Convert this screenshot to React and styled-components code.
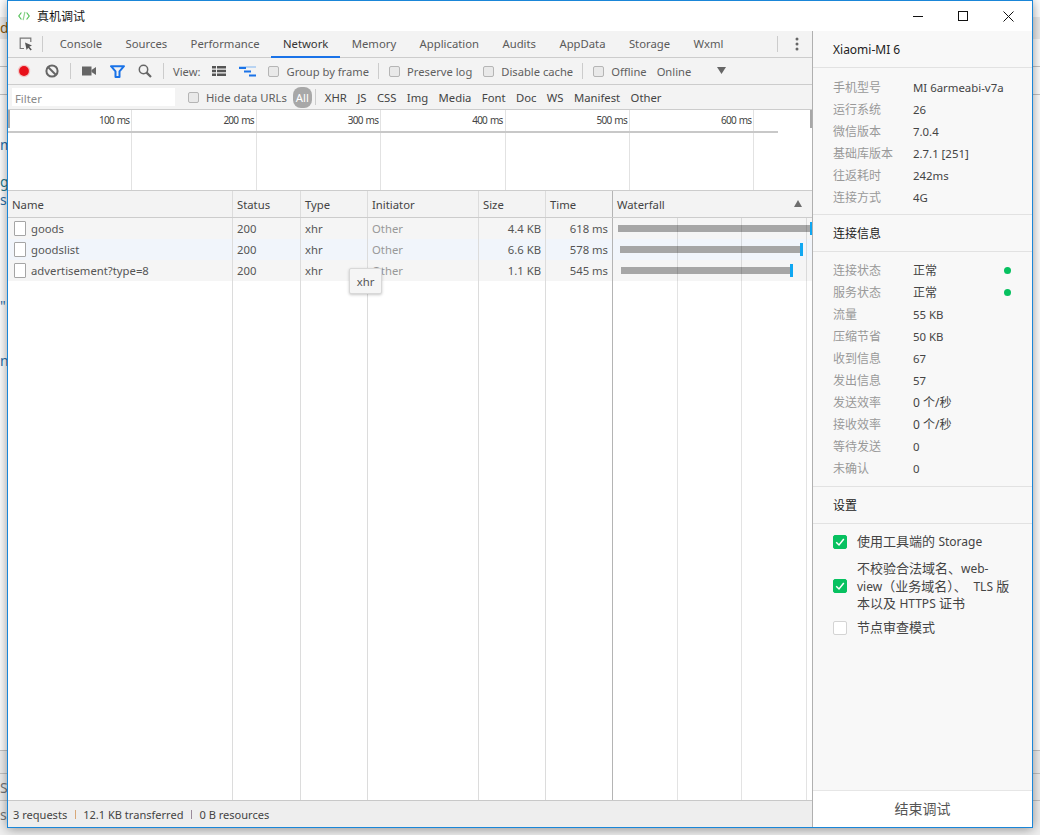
import React from "react";
import styled, { createGlobalStyle } from "styled-components";

const GlobalStyle = createGlobalStyle`
  html, body {
    margin: 0;
    padding: 0;
    background: #f4f4f4;
  }
  * {
    box-sizing: border-box;
  }
  body {
    font-family: "Noto Sans", "Noto Sans CJK SC", sans-serif;
    font-size: 11.3px;
    color: #555;
  }
`;

const Page = styled.div`
  position: relative;
  width: 1040px;
  height: 835px;
  overflow: hidden;
  background: linear-gradient(#fff 0, #fff 750px, #f0f0f0 750px);
`;

const BehindText = styled.span`
  position: absolute;
  left: ${(p) => p.$x}px;
  top: ${(p) => p.$y}px;
  font-size: 14px;
  line-height: 16px;
  color: ${(p) => p.$color || "#2b6ea8"};
`;

const BehindLine = styled.div`
  position: absolute;
  left: 0;
  right: 0;
  top: ${(p) => p.$y}px;
  height: ${(p) => p.$h || 1}px;
  background: ${(p) => p.$color || "#c4c4c4"};
`;

const Window = styled.div`
  position: relative;
  margin-left: 7px;
  width: 1026px;
  height: 828px;
  display: flex;
  flex-direction: column;
  background: #fff;
  border: 1px solid #1a86d8;
  box-shadow: 0 1px 11px rgba(0, 0, 0, 0.42);
`;

const TitleBar = styled.div`
  height: 30px;
  flex: none;
  display: flex;
  align-items: center;
  padding-left: 10px;
  background: #fff;
`;

const TitleText = styled.span`
  margin-left: 7px;
  font-size: 12px;
  color: #111;
`;

const WindowButtons = styled.div`
  margin-left: auto;
  display: flex;
  align-items: center;
  padding-right: 18px;
  gap: 35px;
  color: #111;
`;

const Main = styled.div`
  flex: 1;
  display: flex;
  min-height: 0;
`;

const Devtools = styled.div`
  width: 804px;
  flex: none;
  display: flex;
  flex-direction: column;
  background: #fff;
`;

const TabBar = styled.div`
  height: 27px;
  flex: none;
  display: flex;
  align-items: stretch;
  background: #f3f3f3;
  border-bottom: 1px solid #ccc;
`;

const InspectButton = styled.div`
  width: 34px;
  display: flex;
  align-items: center;
  justify-content: center;
  padding-left: 1px;
  color: #666;
`;

const TabSpacer = styled.div`
  width: 5px;
`;

const Tab = styled.div`
  padding: 0 11.7px;
  display: flex;
  align-items: center;
  white-space: nowrap;
  color: ${(p) => (p.$active ? "#333" : "#5a5a5a")};
  margin-bottom: -1px;
  border-bottom: 2px solid ${(p) => (p.$active ? "#1a73e8" : "transparent")};
`;

const Divider = styled.div`
  width: 1px;
  height: 16px;
  flex: none;
  align-self: center;
  background: #ccc;
  margin: 0 ${(p) => p.$gap ?? 9}px;
`;

const MoreButton = styled.div`
  margin-left: auto;
  width: 35px;
  display: flex;
  align-items: center;
  gap: 17px;
  color: #666;
`;

const Toolbar = styled.div`
  height: 27px;
  flex: none;
  display: flex;
  align-items: center;
  padding-left: 9px;
  font-size: 11.2px;
  background: #f3f3f3;
  border-bottom: 1px solid #ccc;
  white-space: nowrap;
`;

const ToolIcon = styled.div`
  width: ${(p) => p.$w || 28}px;
  margin-left: ${(p) => p.$left ?? 0}px;
  flex: none;
  display: flex;
  align-items: center;
  justify-content: center;
`;

const ToolLabel = styled.span`
  margin: 0 ${(p) => p.$right ?? 0}px 0 ${(p) => p.$left ?? 0}px;
  color: #5f5f5f;
`;

const DropArrow = styled.svg`
  margin-left: 26px;
  margin-bottom: 2px;
`;

const SmallCheck = styled.span`
  display: inline-block;
  width: 11px;
  height: 11px;
  flex: none;
  margin-left: ${(p) => p.$left ?? 0}px;
  margin-right: 7px;
  border: 1px solid #b5b5b5;
  border-radius: 2px;
  background: #e9e9e9;
`;

const FilterBar = styled.div`
  height: 25px;
  flex: none;
  display: flex;
  align-items: center;
  padding-left: 4px;
  background: #f3f3f3;
  border-bottom: 1px solid #ccc;
  white-space: nowrap;
`;

const FilterInput = styled.div`
  width: 163px;
  height: 18px;
  flex: none;
  padding-left: 3px;
  line-height: 21px;
  background: #fff;
  color: #8a8a8a;
`;

const AllPill = styled.span`
  width: 19px;
  height: 21px;
  margin-left: 6px;
  flex: none;
  display: flex;
  align-items: center;
  justify-content: center;
  border-radius: 8px;
  background: #a8a8a8;
  color: #fff;
`;

const TypeFilters = styled.div`
  display: flex;
  padding: 1px 0 0 6px;
`;

const TypeFilter = styled.span`
  margin-right: 10.4px;
  color: #444;
`;

const Overview = styled.div`
  position: relative;
  height: 81px;
  flex: none;
  display: flex;
  background: #fff;
  border-bottom: 1px solid #ccc;
`;

const OverviewTick = styled.div`
  width: 124.4px;
  flex: none;
  padding: 3px 2px 0 0;
  text-align: right;
  font-size: 10px;
  letter-spacing: -0.75px;
  word-spacing: 1px;
  line-height: 14px;
  color: #444;
  border-right: 1px solid #e2e2e2;
`;

const OverviewBar = styled.div`
  position: absolute;
  left: 0;
  top: 21px;
  width: 770px;
  height: 2px;
  background: #c8c8c8;
`;

const OverviewHandle = styled.div`
  position: absolute;
  top: 0;
  ${(p) => (p.$right ? "right: 0;" : "left: 0;")}
  width: 2px;
  height: 18px;
  background: #a8a8a8;
`;

const Table = styled.div`
  position: relative;
  flex: 1;
  min-height: 0;
  display: flex;
  flex-direction: column;
`;

const Row = styled.div`
  display: grid;
  grid-template-columns: 225px 68px 67px 111px 67px 67px 199px;
  flex: ${(p) => (p.$fill ? "1" : "none")};
  height: ${(p) => (p.$fill ? "auto" : p.$head ? "27px" : "21px")};
  background: ${(p) => p.$bg || "transparent"};
  border-bottom: ${(p) => (p.$head ? "1px solid #ccc" : "0")};
`;

const Cell = styled.div`
  position: relative;
  display: flex;
  align-items: center;
  justify-content: ${(p) => (p.$num ? "flex-end" : "flex-start")};
  padding: 0 4px;
  white-space: nowrap;
  color: ${(p) => p.$color || "#555"};
  border-right: ${(p) => (p.$last ? "0" : "1px solid #dcdcdc")};
  ${(p) => (p.$wf ? "border-left: 1px solid #b4b4b4; margin-left: -1px;" : "")}
`;

const HeadCell = styled(Cell)`
  color: #444;
  padding-top: 1px;
`;

const FileIcon = styled.span`
  width: 12px;
  height: 15px;
  margin: 0 5px 0 2px;
  flex: none;
  background: #fff;
  border: 1px solid #a5a5a5;
  border-radius: 1px;
`;

const SortArrow = styled.span`
  position: absolute;
  right: 10px;
  top: 9px;
  width: 0;
  height: 0;
  border-left: 4px solid transparent;
  border-right: 4px solid transparent;
  border-bottom: 7px solid #6e6e6e;
`;

const WaterBar = styled.div`
  position: absolute;
  left: ${(p) => p.$left}px;
  width: ${(p) => p.$width}px;
  top: 7px;
  height: 7px;
  background: #a6a6a6;
`;

const WaterMark = styled.div`
  position: absolute;
  left: ${(p) => p.$left}px;
  width: ${(p) => p.$width}px;
  top: 4px;
  height: 13px;
  background: #0fa7f2;
`;

const WaterLine = styled.div`
  position: absolute;
  left: ${(p) => p.$left}px;
  top: 27px;
  bottom: 0;
  width: 1px;
  background: rgba(0, 0, 0, 0.11);
`;

const Tooltip = styled.div`
  position: absolute;
  left: 341px;
  top: 77px;
  width: 33px;
  height: 26px;
  display: flex;
  align-items: center;
  justify-content: center;
  background: #f5f5f5;
  border: 1px solid #d8d8d8;
  border-radius: 2px;
  box-shadow: 0 1px 3px rgba(0, 0, 0, 0.22);
  color: #555;
`;

const StatusBar = styled.div`
  height: 27px;
  flex: none;
  display: flex;
  align-items: center;
  padding-left: 5px;
  font-size: 11.05px;
  background: #eee;
  border-top: 1px solid #c8c8c8;
  color: #444;
  white-space: nowrap;
`;

const StatusSep = styled.span`
  width: 1px;
  height: 9px;
  margin: 0 7.5px 0 7.5px;
  background: ${(p) => p.$color};
`;

const Panel = styled.div`
  flex: 1;
  display: flex;
  flex-direction: column;
  background: #f8f8f8;
  border-left: 1px solid #b0b0b0;
`;

const PanelHead = styled.div`
  height: ${(p) => p.$h || 37}px;
  flex: none;
  display: flex;
  align-items: center;
  padding-left: 20px;
  font-size: 12px;
  color: #222;
  border-bottom: 1px solid #e2e2e2;
`;

const InfoList = styled.div`
  padding: ${(p) => p.$top}px 20px ${(p) => p.$bottom}px;
  border-bottom: 1px solid #e2e2e2;
`;

const InfoRow = styled.div`
  height: 22px;
  display: flex;
  align-items: center;
`;

const InfoKey = styled.span`
  width: 80px;
  flex: none;
  font-size: 12px;
  color: #999;
`;

const InfoValue = styled.span`
  font-size: ${(p) => (p.$cjk ? "12px" : "11.4px")};
  color: #444;
`;

const StatusDot = styled.span`
  margin-left: auto;
  width: 7px;
  height: 7px;
  border-radius: 50%;
  background: #07c160;
  transform: translateX(-1px);
`;

const Settings = styled.div`
  padding: 8px 20px 0;
  display: flex;
  flex-direction: column;
`;

const SettingRow = styled.div`
  display: flex;
  align-items: center;
  min-height: ${(p) => p.$h || 22}px;
  margin-bottom: ${(p) => p.$gap ?? 0}px;
`;

const BigCheck = styled.span`
  width: 14px;
  height: 14px;
  flex: none;
  margin-right: 10px;
  display: flex;
  align-items: center;
  justify-content: center;
  border-radius: 2px;
  background: ${(p) => (p.$on ? "#07c160" : "#fff")};
  border: 1px solid ${(p) => (p.$on ? "#07c160" : "#d4d4d4")};
`;

const SettingText = styled.span`
  font-size: 13px;
  line-height: 16.5px;
  color: #444;
`;

const Latin = styled.span`
  font-size: 12px;
`;

const EndButton = styled.div`
  margin-top: auto;
  height: 37px;
  flex: none;
  display: flex;
  align-items: center;
  justify-content: center;
  padding-bottom: 3px;
  background: #fff;
  border-top: 1px solid #e6e6e6;
  font-size: 14px;
  color: #555;
`;

const tabs = ["Console", "Sources", "Performance", "Network", "Memory", "Application", "Audits", "AppData", "Storage", "Wxml"];
const ticks = ["100 ms", "200 ms", "300 ms", "400 ms", "500 ms", "600 ms"];
const typeFilters = ["XHR", "JS", "CSS", "Img", "Media", "Font", "Doc", "WS", "Manifest", "Other"];
const requests = [
  { name: "goods", size: "4.4 KB", time: "618 ms", bg: "#f5f5f5", left: 5, width: 192, mark: 197, markW: 2 },
  { name: "goodslist", size: "6.6 KB", time: "578 ms", bg: "#f1f5fb", left: 7, width: 180, mark: 187, markW: 2.5 },
  { name: "advertisement?type=8", size: "1.1 KB", time: "545 ms", bg: "#f5f5f5", left: 8, width: 169, mark: 177, markW: 3 },
];
const deviceInfo = [
  ["手机型号", "MI 6armeabi-v7a"],
  ["运行系统", "26"],
  ["微信版本", "7.0.4"],
  ["基础库版本", "2.7.1 [251]"],
  ["往返耗时", "242ms"],
  ["连接方式", "4G"],
];
const connInfo = [
  ["连接状态", "正常", true],
  ["服务状态", "正常", true],
  ["流量", "55 KB"],
  ["压缩节省", "50 KB"],
  ["收到信息", "67"],
  ["发出信息", "57"],
  ["发送效率", "0 个/秒"],
  ["接收效率", "0 个/秒"],
  ["等待发送", "0"],
  ["未确认", "0"],
];

function CheckMark() {
  return (
    <svg width="10" height="10" viewBox="0 0 10 10" fill="none">
      <path d="M1.2 5.2 4 8l4.8-6" stroke="#fff" strokeWidth="1.5" />
    </svg>
  );
}

function App() {
  return (
    <Page>
      <GlobalStyle />
      <BehindLine $y={17} $h={22} $color="#ececec" />
      <BehindLine $y={66} />
      <BehindLine $y={94} />
      <BehindLine $y={750} />
      <BehindLine $y={773} />
      <BehindLine $y={800} />
      <BehindText $x={0} $y={20} $color="#8a5a10">dy</BehindText>
      <BehindText $x={0} $y={137}>m</BehindText>
      <BehindText $x={0} $y={174} $color="#1f7a8c">g</BehindText>
      <BehindText $x={0} $y={192}>s</BehindText>
      <BehindText $x={0} $y={298}>"</BehindText>
      <BehindText $x={0} $y={353}>n</BehindText>
      <BehindText $x={0} $y={780} $color="#777">S</BehindText>
      <BehindText $x={0} $y={807} $color="#777">s.</BehindText>
      <Window>
        <TitleBar>
          <svg width="12" height="10" viewBox="0 0 12 10" fill="none" strokeWidth="1.2">
            <path d="M3.4 1.5 0.8 5l2.6 3.5" stroke="#57c25c" />
            <path d="M8.6 1.5 11.2 5 8.6 8.5" stroke="#57c25c" />
            <path d="M6.9 0.8 5.1 9.2" stroke="#8fd48f" />
          </svg>
          <TitleText>真机调试</TitleText>
          <WindowButtons>
            <svg width="10" height="10" viewBox="0 0 10 10" fill="none" stroke="currentColor">
              <path d="M0 5.5h10" />
            </svg>
            <svg width="10" height="10" viewBox="0 0 10 10" fill="none" stroke="currentColor">
              <rect x="0.5" y="0.5" width="9" height="9" />
            </svg>
            <svg width="11" height="11" viewBox="0 0 11 11" fill="none" stroke="currentColor">
              <path d="M0.5 0.5 10.5 10.5M10.5 0.5 0.5 10.5" />
            </svg>
          </WindowButtons>
        </TitleBar>
        <Main>
          <Devtools>
            <TabBar>
              <InspectButton>
                <svg width="14" height="14" viewBox="0 0 14 14" fill="none">
                  <path d="M5 11.5H1.2V1.2h10.6V5" stroke="#777" strokeWidth="1.2" />
                  <path d="M6 5.5 13 8.5 10.3 9.8 12.8 12.6 11.6 13.6 9.2 10.8 7.6 13Z" fill="#555" />
                </svg>
              </InspectButton>
              <Divider $gap={0} />
              <TabSpacer />
              {tabs.map((t) => (
                <Tab key={t} $active={t === "Network"}>{t}</Tab>
              ))}
              <MoreButton>
                <Divider $gap={0} />
                <svg width="4" height="14" viewBox="0 0 4 14" fill="#666">
                  <circle cx="2" cy="2" r="1.5" />
                  <circle cx="2" cy="7" r="1.5" />
                  <circle cx="2" cy="12" r="1.5" />
                </svg>
              </MoreButton>
            </TabBar>
            <Toolbar>
              <ToolIcon $w={14}>
                <svg width="18" height="18" viewBox="0 0 18 18">
                  <circle cx="9" cy="9" r="8" fill="#f3c6c6" />
                  <circle cx="9" cy="9" r="6.3" fill="#e8101a" />
                </svg>
              </ToolIcon>
              <ToolIcon $w={28} $left={7}>
                <svg width="14" height="14" viewBox="0 0 14 14" fill="none" stroke="#666" strokeWidth="2">
                  <circle cx="7" cy="7" r="5.6" />
                  <path d="M3 3l8 8" />
                </svg>
              </ToolIcon>
              <Divider $gap={4} />
              <ToolIcon $w={28}>
                <svg width="14" height="10" viewBox="0 0 14 10" fill="#666">
                  <rect x="0" y="0.5" width="9.5" height="9" />
                  <path d="M9.5 4 14 1v8L9.5 6Z" />
                </svg>
              </ToolIcon>
              <ToolIcon $w={28}>
                <svg width="15" height="13" viewBox="0 0 15 13" fill="none">
                  <path d="M1 1.2h13L9.5 6.3V12H5.5V6.3Z" stroke="#1a73e8" strokeWidth="2" strokeLinejoin="round" />
                </svg>
              </ToolIcon>
              <ToolIcon $w={28}>
                <svg width="14" height="14" viewBox="0 0 14 14" fill="none" stroke="#666">
                  <circle cx="5.5" cy="5.5" r="4.2" strokeWidth="1.5" />
                  <path d="M8.6 8.6 13 13" strokeWidth="2.2" />
                </svg>
              </ToolIcon>
              <Divider $gap={4} />
              <ToolLabel $left={5}>View:</ToolLabel>
              <ToolIcon $w={14} $left={12}>
                <svg width="14" height="10" viewBox="0 0 14 10" fill="#555">
                  <rect x="0" y="0" width="4" height="2.5" />
                  <rect x="5" y="0" width="9" height="2.5" />
                  <rect x="0" y="3.75" width="4" height="2.5" />
                  <rect x="5" y="3.75" width="9" height="2.5" />
                  <rect x="0" y="7.5" width="4" height="2.5" />
                  <rect x="5" y="7.5" width="9" height="2.5" />
                </svg>
              </ToolIcon>
              <ToolIcon $w={17} $left={13}>
                <svg width="17" height="11" viewBox="0 0 17 11">
                  <rect x="0" y="0" width="17" height="2" fill="#b9d4f2" />
                  <rect x="0" y="1" width="7" height="2" fill="#1a73e8" />
                  <rect x="5" y="4.5" width="7" height="2" fill="#1a73e8" />
                  <rect x="10" y="8.5" width="7" height="2" fill="#1a73e8" />
                </svg>
              </ToolIcon>
              <SmallCheck $left={12} />
              <ToolLabel>Group by frame</ToolLabel>
              <Divider $gap={9} />
              <SmallCheck $left={1} />
              <ToolLabel>Preserve log</ToolLabel>
              <SmallCheck $left={11} />
              <ToolLabel>Disable cache</ToolLabel>
              <Divider $gap={9} />
              <SmallCheck $left={1} />
              <ToolLabel>Offline</ToolLabel>
              <ToolLabel $left={10}>Online</ToolLabel>
              <DropArrow width="9" height="7" viewBox="0 0 9 7" fill="#666">
                <path d="M0 0h9L4.5 7Z" />
              </DropArrow>
            </Toolbar>
            <FilterBar>
              <FilterInput>Filter</FilterInput>
              <SmallCheck $left={13} />
              <ToolLabel>Hide data URLs</ToolLabel>
              <AllPill>All</AllPill>
              <Divider $gap={3} />
              <TypeFilters>
                {typeFilters.map((t) => (
                  <TypeFilter key={t}>{t}</TypeFilter>
                ))}
              </TypeFilters>
            </FilterBar>
            <Overview>
              {ticks.map((t) => (
                <OverviewTick key={t}>{t}</OverviewTick>
              ))}
              <OverviewBar />
              <OverviewHandle />
              <OverviewHandle $right />
            </Overview>
            <Table>
              <Row $head $bg="#f3f3f3">
                <HeadCell>Name</HeadCell>
                <HeadCell>Status</HeadCell>
                <HeadCell>Type</HeadCell>
                <HeadCell>Initiator</HeadCell>
                <HeadCell>Size</HeadCell>
                <HeadCell>Time</HeadCell>
                <HeadCell $wf $last>
                  Waterfall
                  <SortArrow />
                </HeadCell>
              </Row>
              {requests.map((r) => (
                <Row key={r.name} $bg={r.bg}>
                  <Cell>
                    <FileIcon />
                    {r.name}
                  </Cell>
                  <Cell>200</Cell>
                  <Cell>xhr</Cell>
                  <Cell $color="#999">Other</Cell>
                  <Cell $num>{r.size}</Cell>
                  <Cell $num>{r.time}</Cell>
                  <Cell $wf $last>
                    <WaterBar $left={r.left} $width={r.width} />
                    <WaterMark $left={r.mark} $width={r.markW} />
                  </Cell>
                </Row>
              ))}
              <Row $fill>
                <Cell />
                <Cell />
                <Cell />
                <Cell />
                <Cell />
                <Cell />
                <Cell $wf $last />
              </Row>
              <WaterLine $left={669} />
              <WaterLine $left={733} />
              <WaterLine $left={798} />
              <Tooltip>xhr</Tooltip>
            </Table>
            <StatusBar>
              3 requests
              <StatusSep $color="#d8a878" />
              12.1 KB transferred
              <StatusSep $color="#9a8a9a" />
              0 B resources
            </StatusBar>
          </Devtools>
          <Panel>
            <PanelHead>Xiaomi-MI 6</PanelHead>
            <InfoList $top={8} $bottom={6}>
              {deviceInfo.map(([k, v]) => (
                <InfoRow key={k}>
                  <InfoKey>{k}</InfoKey>
                  <InfoValue>{v}</InfoValue>
                </InfoRow>
              ))}
            </InfoList>
            <PanelHead>连接信息</PanelHead>
            <InfoList $top={7} $bottom={7}>
              {connInfo.map(([k, v, dot]) => (
                <InfoRow key={k}>
                  <InfoKey>{k}</InfoKey>
                  <InfoValue $cjk={/[^\x00-\x7f]/.test(v)}>{v}</InfoValue>
                  {dot && <StatusDot />}
                </InfoRow>
              ))}
            </InfoList>
            <PanelHead>设置</PanelHead>
            <Settings>
              <SettingRow $h={20} $gap={8}>
                <BigCheck $on><CheckMark /></BigCheck>
                <SettingText>使用工具端的 <Latin>Storage</Latin></SettingText>
              </SettingRow>
              <SettingRow $gap={5}>
                <BigCheck $on><CheckMark /></BigCheck>
                <SettingText>
                  不校验合法域名、<Latin>web-</Latin>
                  <br />
                  <Latin>view</Latin>（业务域名）、&nbsp;&nbsp;<Latin>TLS</Latin> 版
                  <br />
                  本以及 <Latin>HTTPS</Latin> 证书
                </SettingText>
              </SettingRow>
              <SettingRow $h={20}>
                <BigCheck />
                <SettingText>节点审查模式</SettingText>
              </SettingRow>
            </Settings>
            <EndButton>结束调试</EndButton>
          </Panel>
        </Main>
      </Window>
    </Page>
  );
}

export default App;
